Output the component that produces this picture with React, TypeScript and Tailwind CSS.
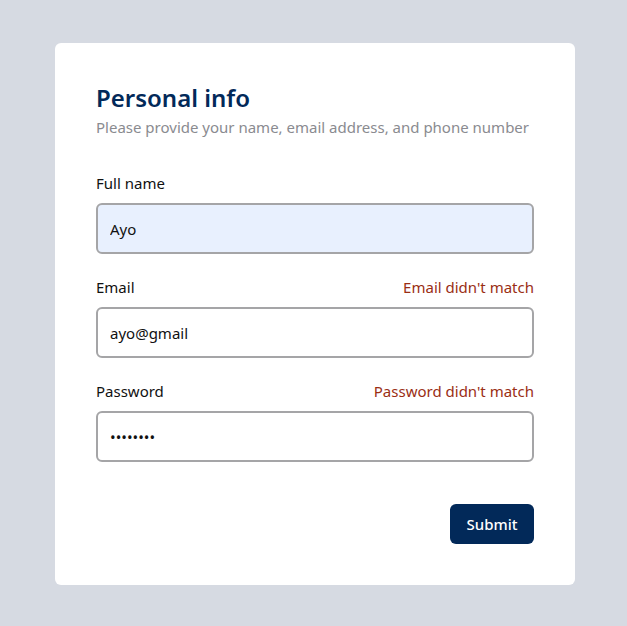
const fields = [
  { label: 'Full name', value: 'Ayo', type: 'text', error: '', filled: true },
  { label: 'Email', value: 'ayo@gmail', type: 'text', error: "Email didn't match", filled: false },
  { label: 'Password', value: 'password', type: 'password', error: "Password didn't match", filled: false },
];

export default function App() {
  return (
    <div className="min-h-[626px] bg-[#d6dae2] pt-[43px] pl-[55px] font-['Noto_Sans',sans-serif]">
      <div className="w-[520px] h-[542px] rounded-md bg-white px-[41px] pt-[39px]">
        <h1 className="text-[24px] leading-8 font-semibold text-[#022959]">Personal info</h1>
        <p className="mt-[1px] whitespace-nowrap text-[15px] leading-6 text-[#8a8b90]">
          Please provide your name, email address, and phone number
        </p>

        <form className="mt-[32px] flex flex-col gap-[21px]">
          {fields.map((f) => (
            <div key={f.label} className="flex flex-col gap-2">
              <div className="flex items-center justify-between text-[15px] leading-6">
                <label className="text-[#111]">{f.label}</label>
                {f.error && <span className="text-[#9a2e14]">{f.error}</span>}
              </div>
              <input
                readOnly
                type={f.type}
                value={f.value}
                className={`h-[51px] w-full rounded-md border-2 border-[#a5a5a7] px-[12px] text-[15px] text-[#111] outline-none ${
                  f.filled ? 'bg-[#e8f0fe]' : 'bg-white'
                }`}
              />
            </div>
          ))}
        </form>

        <div className="mt-[42px] flex justify-end">
          <button className="h-[40px] w-[84px] rounded-md bg-[#022959] text-[15px] font-medium text-white">
            Submit
          </button>
        </div>
      </div>
    </div>
  );
}
